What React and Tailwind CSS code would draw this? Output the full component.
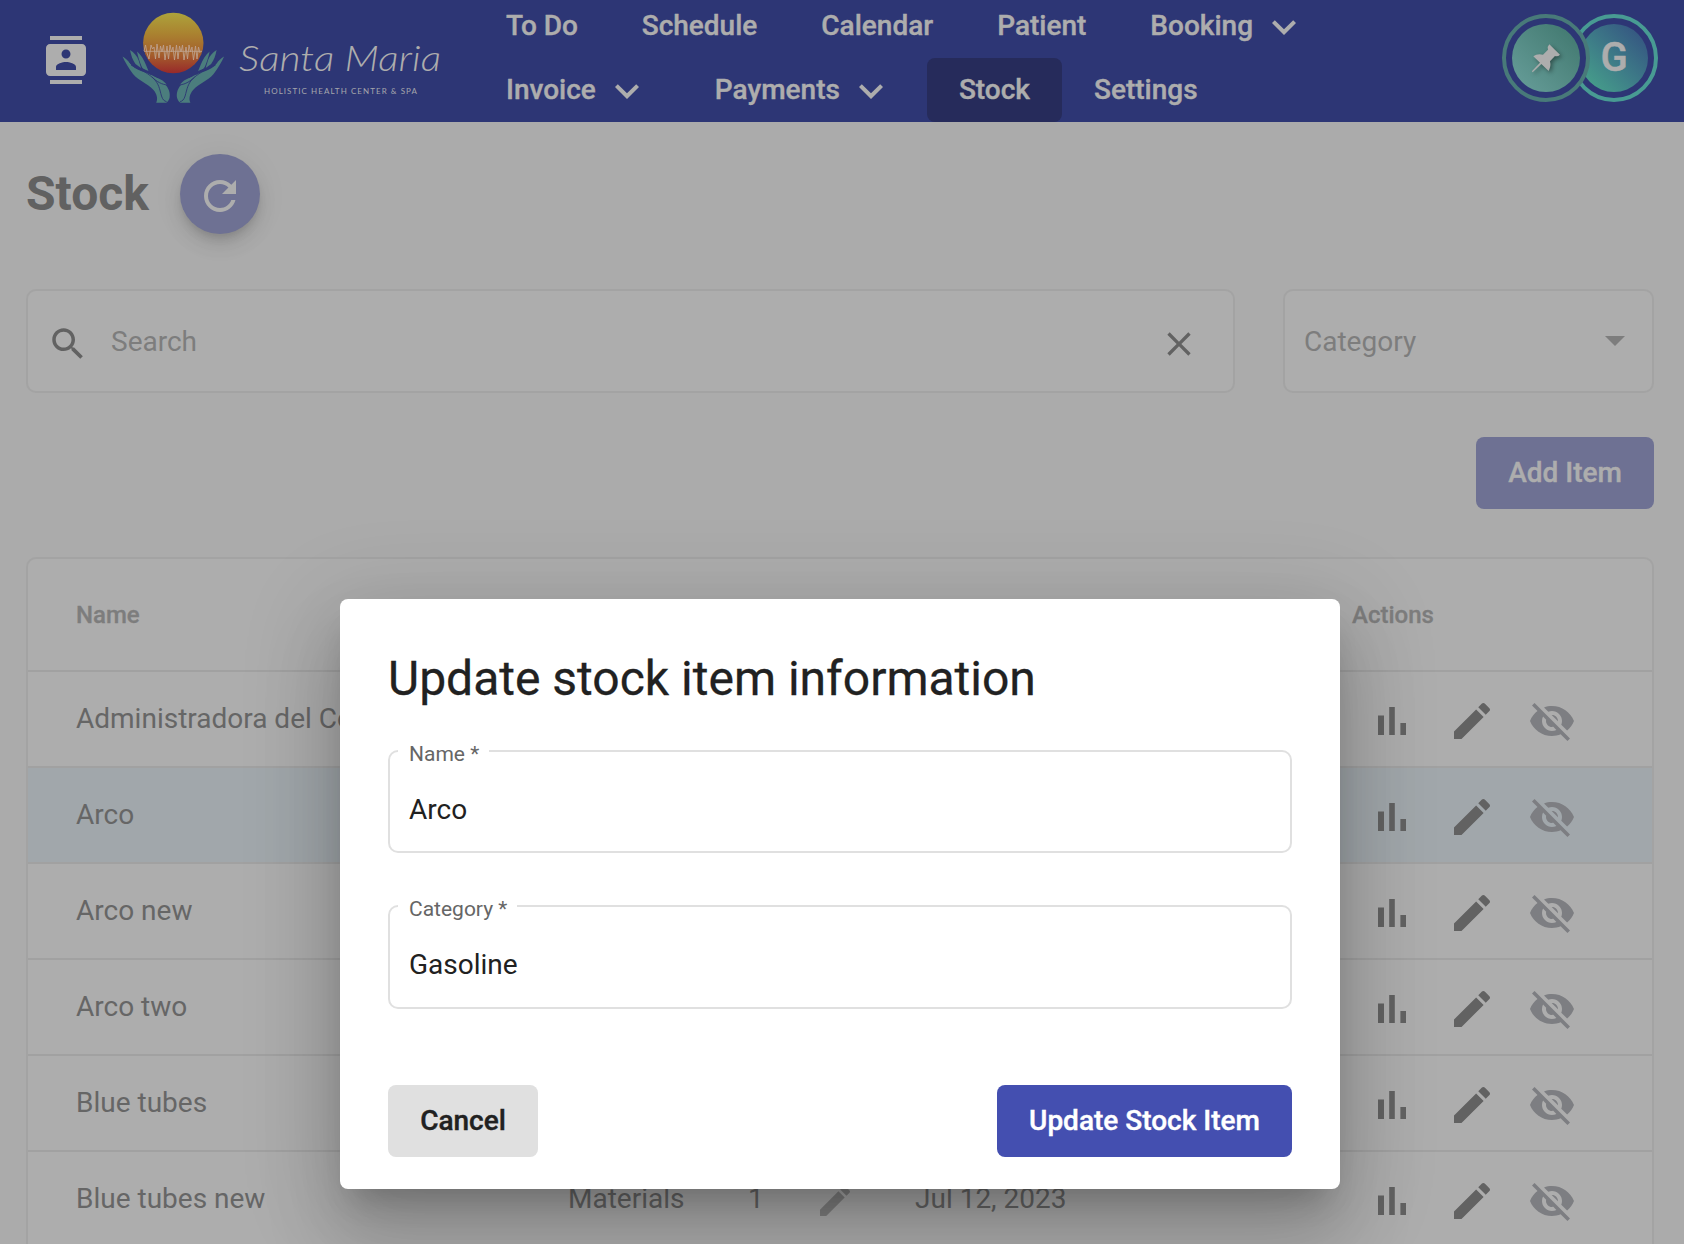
import React from "react";

const paths = {
  contacts:
    "M20 0H4v2h16V0zM4 24h16v-2H4v2zM20 4H4c-1.1 0-2 .9-2 2v12c0 1.1.9 2 2 2h16c1.1 0 2-.9 2-2V6c0-1.1-.9-2-2-2zm-8 2.75c1.24 0 2.25 1.01 2.25 2.25s-1.01 2.25-2.25 2.25S9.75 10.24 9.75 9 10.76 6.75 12 6.75zM17 17H7v-1.5c0-1.67 3.33-2.5 5-2.5s5 .83 5 2.5V17z",
  chevron: "M7.41 8.59 12 13.17l4.59-4.58L18 10l-6 6-6-6z",
  refresh:
    "M17.65 6.35C16.2 4.9 14.21 4 12 4c-4.42 0-7.99 3.58-7.99 8s3.57 8 7.99 8c3.73 0 6.84-2.55 7.73-6h-2.08c-.82 2.33-3.04 4-5.65 4-3.31 0-6-2.69-6-6s2.69-6 6-6c1.66 0 3.14.69 4.22 1.78L13 11h7V4l-2.35 2.35z",
  search:
    "M15.5 14h-.79l-.28-.27C15.41 12.59 16 11.11 16 9.5 16 5.91 13.09 3 9.5 3S3 5.91 3 9.5 5.91 16 9.5 16c1.61 0 3.09-.59 4.23-1.57l.27.28v.79l5 4.99L20.49 19l-4.99-5zm-6 0C7.01 14 5 11.99 5 9.5S7.01 5 9.5 5 14 7.01 14 9.5 11.99 14 9.5 14z",
  close:
    "M19 6.41 17.59 5 12 10.59 6.41 5 5 6.41 10.59 12 5 17.59 6.41 19 12 13.41 17.59 19 19 17.59 13.41 12z",
  bars: "M5 9.2h3V19H5zM10.6 5h2.8v14h-2.8zm5.6 8H19v6h-2.8z",
  edit: "M3 17.25V21h3.75L17.81 9.94l-3.75-3.75L3 17.25zM20.71 7.04c.39-.39.39-1.02 0-1.41l-2.34-2.34c-.39-.39-1.02-.39-1.41 0l-1.83 1.83 3.75 3.75 1.83-1.83z",
  hidden:
    "M12 7c2.76 0 5 2.24 5 5 0 .65-.13 1.26-.36 1.83l2.92 2.92c1.51-1.26 2.7-2.89 3.43-4.75-1.73-4.39-6-7.5-11-7.5-1.4 0-2.74.25-3.98.7l2.16 2.16C10.74 7.13 11.35 7 12 7zM2 4.27l2.28 2.28.46.46C3.08 8.3 1.78 10.02 1 12c1.73 4.39 6 7.5 11 7.5 1.55 0 3.03-.3 4.38-.84l.42.42L19.73 22 21 20.73 3.27 3 2 4.27zM7.53 9.8l1.55 1.55c-.05.21-.08.43-.08.65 0 1.66 1.34 3 3 3 .22 0 .44-.03.65-.08l1.55 1.55c-.67.33-1.41.53-2.2.53-2.76 0-5-2.24-5-5 0-.79.2-1.53.53-2.2zm4.31-.78 3.15 3.15.02-.16c0-1.66-1.34-3-3-3l-.17.01z",
};

function Icon({ d, className }) {
  return (
    <svg viewBox="0 0 24 24" fill="currentColor" className={"shrink-0 " + className}>
      <path d={d} />
    </svg>
  );
}

function Hand() {
  return (
    <g>
      <path
        fill="#4b7d7d"
        d="M122.500 56.500C125 58 128 60.500 131 64.500C133 67 136 69 141 71C149 73.500 157 77 164 83C169 88 170.500 93 169.500 98C168.500 101 167 102.500 166 102.700H156.200C158 99 157 94 153.500 90C147 83 139 81 133 74C128.500 68 125 62 122.500 56.500Z"
      />
      <path fill="#4b7d7d" d="M130 50C134 52.500 137 56 138.500 60L141 68L135.500 64C132.500 60 131 55 130 50Z" />
      <path fill="#4b7d7d" d="M137 51.500C141 54.500 144 60 146 65L148.500 71L142.500 68.500C140 63 138 57 137 51.500Z" />
      <path fill="#4b7d7d" d="M152 77C158 77.500 164 80.500 167 85C161 84 156 81.500 152 77Z" />
      <path
        fill="none"
        stroke="#2d3675"
        strokeWidth="0.9"
        d="M131 65C138 69 146 71.500 153 78C159 83.500 159.500 89 161.500 96C162.500 99.500 164.500 101.500 166.500 101.500M129.500 62C131.500 65 133 66 136 66.500M141 67C144 70 146 71.500 151 74.500M152 77C157 82 162 84.500 167.500 85"
      />
    </g>
  );
}

function Logo() {
  return (
    <svg viewBox="118 8 330 100" className="-mt-1.5 ml-7 h-[100px] w-[330px] shrink-0">
      <defs>
        <linearGradient id="sun" x1="0" y1="0" x2="0" y2="1">
          <stop offset="0" stopColor="#ada33b" />
          <stop offset="0.35" stopColor="#aa8230" />
          <stop offset="0.7" stopColor="#a45d2c" />
          <stop offset="1" stopColor="#98292a" />
        </linearGradient>
      </defs>
      <circle cx="173.300" cy="43" r="30.200" fill="url(#sun)" />
      <path
        fill="none"
        stroke="#bda08b"
        strokeWidth="0.9"
        d="M144 51.300H202M144 51l1.500-6 1.500 8 2 6 2-14 1.500 4 1.500-2 1.500 12 1.500-15 2 14 1.500-12 1.500 6 1.500-7 1.500 15 2-14 1.500 13 1.500-14 1.500 7 1.500-5 1.500 13 2-15 1.500 14 1.500-13 1.500 6 1.500-7 1.500 15 2-13 1.500 12 1.500-14 1.500 7 1.500-5 1.500 13 2-14 1.500 13 1.500-12 1.500 6"
      />
      <Hand />
      <g transform="translate(346.600 0) scale(-1 1)">
        <Hand />
      </g>
      <text
        x="239"
        y="71"
        textLength="202"
        lengthAdjust="spacingAndGlyphs"
        fill="#adadad"
        className="font-['Lato',sans-serif] text-[36px] font-light italic"
      >
        Santa Maria
      </text>
      <text
        x="264"
        y="93.500"
        textLength="153"
        lengthAdjust="spacing"
        fill="#a5a6ac"
        className="font-['Lato',sans-serif] text-[8px]"
      >
        HOLISTIC HEALTH CENTER &amp; SPA
      </text>
    </svg>
  );
}

function NavItem({ label, menu, active, tight }) {
  return (
    <div className={"flex h-16 items-center px-8 " + (active ? "rounded-lg bg-[#262b5b]" : "")}>
      <span className={tight ? "tracking-[-0.1px]" : ""}>{label}</span>
      {menu && <Icon d={paths.chevron} className="mt-0.5 ml-[7px] size-12" />}
    </div>
  );
}

function Header() {
  return (
    <header className="flex h-[122px] items-center overflow-hidden bg-[#2d3675] pl-[42px] text-[#adadad]">
      <Icon d={paths.contacts} className="-mt-0.5 size-12" />
      <Logo />
      <nav className="ml-[26px] flex w-[1026px] shrink-0 flex-col self-end text-[28px] font-medium whitespace-nowrap [-webkit-text-stroke:0.4px_currentColor]">
        <div className="flex">
          <NavItem label="To Do" tight />
          <NavItem label="Schedule" />
          <NavItem label="Calendar" />
          <NavItem label="Patient" />
          <NavItem label="Booking" menu />
        </div>
        <div className="flex">
          <NavItem label="Invoice" menu />
          <NavItem label="Payments" menu />
          <NavItem label="Stock" active />
          <NavItem label="Settings" />
        </div>
      </nav>
      <div className="-mt-1.5 ml-0.5 flex">
        <div className="z-10 flex size-[88px] shrink-0 items-center justify-center rounded-full border-4 border-[#487a79] bg-[#2d3675]">
          <div className="flex size-[68px] items-center justify-center rounded-full bg-linear-to-tr from-[#689f9b] to-[#3f766d]">
            <svg viewBox="150 120 100 100" className="size-[33.300px] drop-shadow-[2px_2px_2px_rgba(0,0,0,0.4)]">
              <path
                fill="#adadad"
                d="M211 130L243 161Q237 167 228 165L213 181Q217 195 209 210L187 189L161 214Q158 212 160 209L183 185L163 166Q174 157 192 161L207 146Q204 137 211 130Z"
              />
            </svg>
          </div>
        </div>
        <div className="-ml-5 flex size-[88px] shrink-0 items-center justify-center rounded-full border-4 border-[#489b93]">
          <div className="flex size-[68px] items-center justify-center rounded-full bg-linear-to-tr from-[#459a8a] from-15% to-[#365a82] to-85% text-[40px] font-medium [-webkit-text-stroke:0.5px_currentColor]">
            G
          </div>
        </div>
      </div>
    </header>
  );
}

const rows = ["Administradora del Condominio", "Arco", "Arco new", "Arco two", "Blue tubes", "Blue tubes new"];

function Row({ name, selected, last }) {
  return (
    <div
      className={
        "flex h-24 shrink-0 items-center border-b-2 border-[#a1a1a1] text-[28px] " + (selected ? "bg-[#a1a7ab]" : "")
      }
    >
      <div className="w-[492px] shrink-0 overflow-hidden pl-12 whitespace-nowrap">{name}</div>
      <div className="flex w-[784px] shrink-0 items-center pl-12">
        {last && (
          <>
            <span className="w-[180px]">Materials</span>
            <span className="w-[67px]">1</span>
            <Icon d={paths.edit} className="mt-1 size-10 text-[#828282]" />
            <span className="ml-[60px]">Jul 12, 2023</span>
          </>
        )}
      </div>
      <div className="mt-1 flex gap-8 pl-16 text-[#626262]">
        <Icon d={paths.bars} className="size-12" />
        <Icon d={paths.edit} className="size-12" />
        <Icon d={paths.hidden} className="size-12 text-[#7d7e82]" />
      </div>
    </div>
  );
}

function Field({ label, value, className }) {
  return (
    <div
      className={
        "relative flex items-center rounded-[10px] border-2 border-[#e0e0e0] pl-[19px] text-[28px] text-[#212121] " +
        className
      }
    >
      <span className="absolute -top-3 left-2 bg-white pr-2.5 pl-[11px] text-[21px] leading-[28px] text-[#666]">
        {label} *
      </span>
      {value}
    </div>
  );
}

function Dialog() {
  return (
    <div className="absolute top-[599px] left-[340px] flex h-[590px] w-[1000px] flex-col rounded-lg bg-white px-12 shadow-[0_22px_30px_-14px_rgba(0,0,0,0.2),0_48px_76px_6px_rgba(0,0,0,0.14),0_18px_92px_16px_rgba(0,0,0,0.12)]">
      <h2 className="mt-12 text-[48px] leading-[64px] text-[#212121] [-webkit-text-stroke:0.3px_currentColor]">
        Update stock item information
      </h2>
      <div className="mt-[39px] flex h-[259px] flex-col justify-between">
        <Field label="Name" value="Arco" className="h-[103px] pt-[17px]" />
        <Field label="Category" value="Gasoline" className="h-[104px] pt-4" />
      </div>
      <div className="mt-19 flex justify-between text-[28px] font-medium [-webkit-text-stroke:0.4px_currentColor]">
        <button className="h-18 w-[150px] rounded-lg bg-[#e0e0e0] text-[#212121]">Cancel</button>
        <button className="h-18 w-[295px] rounded-lg bg-[#444fb0] text-white">Update Stock Item</button>
      </div>
    </div>
  );
}

export default function App() {
  return (
    <div className="relative h-[1244px] w-full overflow-hidden bg-[#ababab] font-['Roboto',sans-serif] text-[#666]">
      <Header />
      <main className="flex flex-col pr-[30px] pl-[26px]">
        <div className="mt-8 flex items-center">
          <h1 className="w-[154px] text-[48px] font-bold text-[#616161]">Stock</h1>
          <div className="flex size-20 items-center justify-center rounded-full bg-[#6e7193] pt-1 text-[#adadad] shadow-[0_6px_10px_-2px_rgba(0,0,0,0.14),0_12px_20px_0_rgba(0,0,0,0.08),0_2px_36px_0_rgba(0,0,0,0.05)]">
            <Icon d={paths.refresh} className="size-12" />
          </div>
        </div>
        <div className="mt-[55px] flex justify-between text-[28px] text-[#7d7d7d]">
          <div className="flex h-[104px] w-[1209px] items-center rounded-[10px] border-2 border-[#a3a3a3] bg-[#adadad] pl-[19px]">
            <Icon d={paths.search} className="mt-1.5 size-[42px] text-[#626262]" />
            <span className="mt-0.5 ml-[22px] grow">Search</span>
            <Icon d={paths.close} className="mt-1.5 mr-[34px] size-10 text-[#626262]" />
          </div>
          <div className="flex h-[104px] w-[371px] items-center justify-between rounded-[10px] border-2 border-[#a3a3a3] bg-[#adadad] pr-[27px] pl-[19px]">
            <span className="mt-0.5">Category</span>
            <span className="border-x-10 border-t-10 border-x-transparent border-t-[#7d7d7d]" />
          </div>
        </div>
        <div className="mt-11 flex h-18 w-[178px] items-center justify-center self-end rounded-lg bg-[#6e7193] text-[28px] font-medium text-[#adadad] [-webkit-text-stroke:0.4px_currentColor]">
          Add Item
        </div>
        <section className="mt-12 flex h-[720px] flex-col overflow-hidden rounded-t-[10px] border-2 border-[#a3a3a3] bg-[#adadad]">
          <div className="flex h-[113px] shrink-0 items-center border-b-2 border-[#a1a1a1] text-[24px] font-medium text-[#7d7d7d] [-webkit-text-stroke:0.3px_currentColor]">
            <span className="w-[1324px] pl-12">Name</span>
            <span>Actions</span>
          </div>
          {rows.map((name, i) => (
            <Row key={name} name={name} selected={i === 1} last={i === 5} />
          ))}
        </section>
      </main>
      <Dialog />
    </div>
  );
}
